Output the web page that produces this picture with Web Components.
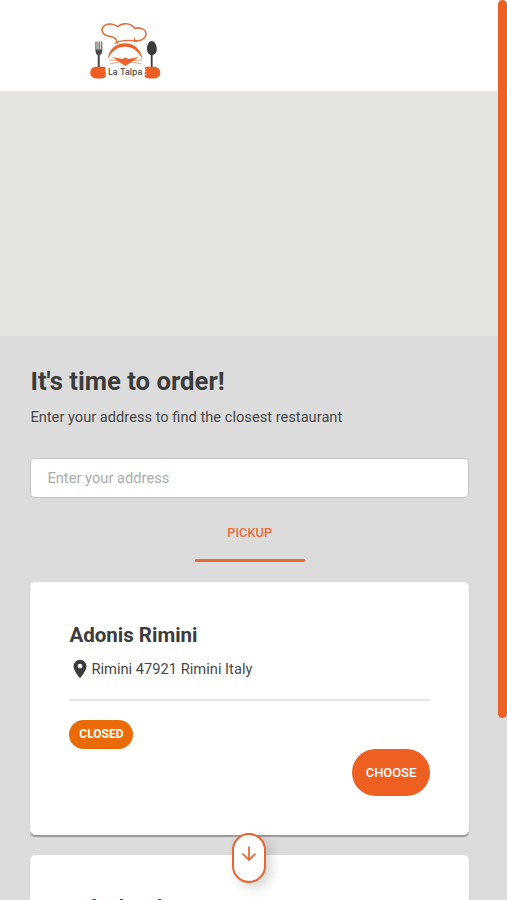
<!DOCTYPE html>
<html lang="en">
<head>
<meta charset="utf-8">
<title>La Talpa</title>
<style>
  html, body { margin: 0; height: 100%; overflow: hidden; }
  body { font-family: Roboto, "Liberation Sans", sans-serif; color: #3c3c3c; }
</style>
</head>
<body>
<order-page>
  <talpa-logo slot="header"></talpa-logo>
  <order-search>
    <span slot="title">It's time to order!</span>
    <span slot="subtitle">Enter your address to find the closest restaurant</span>
  </order-search>
  <order-tab>PICKUP</order-tab>
  <restaurant-card name="Adonis Rimini" address="Rimini 47921 Rimini Italy" status="CLOSED"></restaurant-card>
  <restaurant-card name="rufo decal"></restaurant-card>
  <scroll-button slot="overlay"></scroll-button>
</order-page>

<script>
class OrderPage extends HTMLElement {
  constructor() {
    super();
    this.attachShadow({ mode: "open" }).innerHTML = `
    <style>
      :host {
        display: flex;
        height: 900px;
        position: relative;
        overflow: hidden;
        background: #dcdcdc;
      }
      .content {
        flex: 1;
        min-width: 0;
        display: flex;
        flex-direction: column;
      }
      header {
        flex: none;
        box-sizing: border-box;
        height: 92px;
        padding: 20px 0 0 88px;
        background: #fff;
        border-bottom: 1px solid #ecebe8;
      }
      .map {
        flex: none;
        height: 244px;
        background: #e5e3df;
      }
      main {
        display: flex;
        flex-direction: column;
        padding: 0 29.4px 0 30.4px;
      }
      .scrollbar {
        flex: none;
        width: 8.6px;
        background: linear-gradient(#fff 91px, #e5e3df 91px 336px, #dcdcdc 336px);
      }
      .thumb {
        height: 718px;
        border-radius: 5px;
        background: #ed6224;
      }
    </style>
    <div class="content">
      <header><slot name="header"></slot></header>
      <div class="map"></div>
      <main><slot></slot></main>
    </div>
    <div class="scrollbar"><div class="thumb"></div></div>
    <slot name="overlay"></slot>
    `;
  }
}

class TalpaLogo extends HTMLElement {
  constructor() {
    super();
    this.attachShadow({ mode: "open" }).innerHTML = `
    <style>
      :host { display: block; width: 76px; height: 62px; }
      svg { display: block; }
      text { font: 500 8.4px Inter, sans-serif; }
    </style>
    <svg width="76" height="62" viewBox="88 20 76 62">
      <!-- chef hat -->
      <g fill="none" stroke="#e96a35" stroke-linecap="round" stroke-linejoin="round">
        <path stroke-width="1.5" d="M117.500 43C117 40 115.500 37.500 111 36.500C105 36 101.500 33 102 29.500C102.600 25.500 107 23.700 111 24C114 24.500 116 25.500 118 26.500C121.500 22.800 130.500 22 135 28.500C139 26.800 145.500 29 146 33.500C146.200 38.500 140 41.800 134.500 40.500"/>
        <path stroke-width="1.2" d="M134.300 38V41"/>
        <path stroke-width="1.2" d="M115 43.500C119 40.500 129 39.500 136.500 41.500"/>
      </g>
      <!-- mole -->
      <path d="M107.600 59.500C109 48.500 116.500 43.200 125 43.200S141 48.500 142.600 59.500C138.500 51 132.500 46.800 125 46.800S111.500 51 107.600 59.500Z" fill="#ed622c"/>
      <path d="M125.400 66L120 62.500L112.500 57L122.500 59L125.400 57.500L128.300 59L138.500 57L131 62.500Z" fill="#ed622c"/>
      <path d="M118 60.500L109 60M119 62L109.500 64M133 60.500L142 60M132 62L141.500 64" stroke="#ed8a5c" stroke-width=".8"/>
      <!-- cutlery -->
      <path d="M95.400 41.500V51Q95.400 54 97.700 55V67H99.800V55Q102.300 54 102.300 51V41.500H101.300V49.500H100.200V41.500H99.300V49.500H98.400V41.500H97.500V49.500H96.500V41.500Z" fill="#4c4c4c"/>
      <path d="M151.700 41C148.700 41 147 45 147 49C147 52 148.500 54.500 150.800 55.200V67H152.600V55.200C155.500 54.500 156.800 52 156.800 49C156.800 45 154.700 41 151.700 41Z" fill="#3b3b3b"/>
      <!-- paws -->
      <path d="M96 66.800H103.500Q106.500 67.300 105.500 69H103.500Q106.500 69.500 105.500 71.500H103.500Q107 72 106 74H103.500Q107.500 75 105.500 77Q104 78.500 98 78.500H96A5.850 5.850 0 0 1 96 66.800Z" fill="#ee5d24"/>
      <path d="M154.500 66.800H147.500Q144 67.300 145 69H147.500Q144 69.500 145 71.500H147.500Q143.500 72 144.500 74H147.500Q143 75 145 77Q146.500 78.500 152 78.500H154.500A5.850 5.850 0 0 0 154.500 66.800Z" fill="#ee5d24"/>
      <text x="108" y="75.400" fill="#444" textLength="34.300" lengthAdjust="spacingAndGlyphs">La Talpa</text>
    </svg>
    `;
  }
}

class OrderSearch extends HTMLElement {
  constructor() {
    super();
    this.attachShadow({ mode: "open" }).innerHTML = `
    <style>
      :host {
        display: flex;
        flex-direction: column;
        padding-top: 29px;
      }
      h1 {
        margin: 0;
        font-size: 25.7px;
        line-height: 32px;
        font-weight: 700;
      }
      p {
        margin: 10px 0 30px;
        font-size: 14.67px;
        line-height: 21px;
        color: #484848;
      }
      input {
        box-sizing: border-box;
        width: 100%;
        height: 40px;
        padding: 0 16px;
        border: 1px solid #c5c5c5;
        border-radius: 4px;
        background: #fff;
        font: 14.7px Roboto, sans-serif;
        outline: none;
      }
      input::placeholder { color: #acacac; opacity: 1; }
    </style>
    <h1><slot name="title"></slot></h1>
    <p><slot name="subtitle"></slot></p>
    <input type="text" placeholder="Enter your address">
    `;
  }
}

class OrderTab extends HTMLElement {
  constructor() {
    super();
    this.attachShadow({ mode: "open" }).innerHTML = `
    <style>
      :host {
        display: block;
        box-sizing: border-box;
        align-self: center;
        width: 110px;
        height: 64px;
        margin-bottom: 20px;
        padding-top: 25px;
        color: #e86c3b;
        font-size: 12.8px;
        line-height: 19px;
        font-weight: 500;
        text-align: center;
      }
      .underline {
        height: 3px;
        margin-top: 17px;
        border-radius: 1px;
        background: #e86c3b;
      }
    </style>
    <slot></slot>
    <div class="underline"></div>
    `;
  }
}

class RestaurantCard extends HTMLElement {
  connectedCallback() {
    const address = this.getAttribute("address");
    const root = this.attachShadow({ mode: "open" });
    root.innerHTML = `
    <style>
      :host {
        display: flex;
        flex-direction: column;
        flex: none;
        box-sizing: border-box;
        height: 253px;
        margin-bottom: 20px;
        padding: 40px 39px 0;
        background: #fff;
        border-radius: 5px;
        box-shadow: 0 1.500px 1px #999;
      }
      :host(:not([address])) { padding-top: 39px; }
      h2 {
        margin: 0;
        font-size: 20.5px;
        line-height: 26px;
        font-weight: 700;
      }
      .address {
        display: flex;
        align-items: center;
        height: 28px;
        margin-top: 7px;
        padding-left: 4px;
        font-size: 14.7px;
        color: #484848;
      }
      .address svg { margin-right: 4px; }
      hr {
        width: 100%;
        box-sizing: border-box;
        margin: 16px 0 19px;
        border: 0;
        height: 2px;
        background: #e8e8e8;
      }
      .status {
        align-self: flex-start;
        width: 64px;
        border-radius: 15px;
        background: #ea6a05;
        color: #fff;
        font-size: 12px;
        line-height: 29px;
        font-weight: 700;
        text-align: center;
      }
      button {
        align-self: flex-end;
        width: 78px;
        height: 47px;
        padding: 0;
        border: 0;
        border-radius: 24px;
        background: #ed6022;
        color: #fff;
        font: 500 12.900px Roboto, sans-serif;
      }
    </style>
    <h2>${this.getAttribute("name")}</h2>
    `;
    if (!address) return;
    root.innerHTML += `
    <div class="address">
      <svg width="14" height="20" viewBox="0 0 14 20">
        <path fill="#3b3b3b" fill-rule="evenodd" d="M7 .8A6.500 6.500 0 0 0 .5 7.300C.5 12 7 19.200 7 19.200S13.500 12 13.500 7.300A6.500 6.500 0 0 0 7 .8ZM7 9.600A2.400 2.400 0 1 1 7 4.800A2.400 2.400 0 0 1 7 9.600Z"/>
      </svg>
      <span>${address}</span>
    </div>
    <hr>
    <div class="status">${this.getAttribute("status")}</div>
    <button>CHOOSE</button>
    `;
  }
}

class ScrollButton extends HTMLElement {
  constructor() {
    super();
    this.attachShadow({ mode: "open" }).innerHTML = `
    <style>
      /* floats over the cards */
      :host {
        display: flex;
        justify-content: center;
        box-sizing: border-box;
        position: absolute;
        left: 232px;
        top: 833px;
        width: 34px;
        height: 50px;
        padding-top: 11px;
        border: 2px solid #e8642f;
        border-radius: 17px;
        background: #fff;
        box-shadow: 5px 5px 12px rgba(0, 0, 0, .16);
      }
    </style>
    <svg width="16" height="16" viewBox="0 0 16 16" fill="none" stroke="#e8642f" stroke-width="1.700">
      <path d="M8 .5V14M1.500 7.500L8 14L14.500 7.500"/>
    </svg>
    `;
  }
}

customElements.define("talpa-logo", TalpaLogo);
customElements.define("order-search", OrderSearch);
customElements.define("order-tab", OrderTab);
customElements.define("restaurant-card", RestaurantCard);
customElements.define("scroll-button", ScrollButton);
customElements.define("order-page", OrderPage);
</script>
</body>
</html>
